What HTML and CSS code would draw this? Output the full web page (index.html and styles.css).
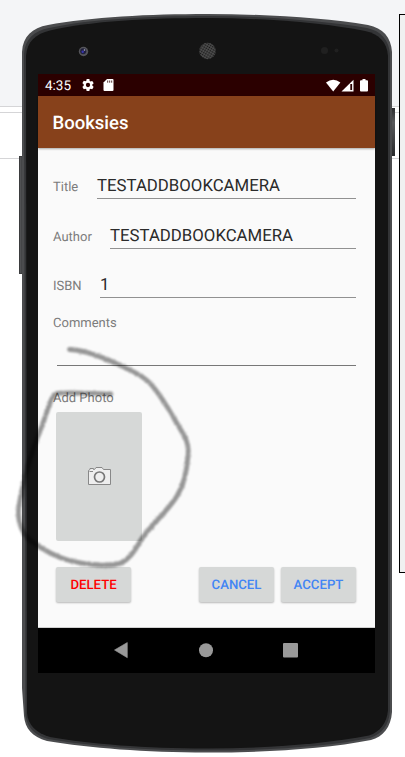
FILE: index.html
```html
<!DOCTYPE html>
<html lang="en">
<head>
<meta charset="utf-8">
<title>Booksies</title>
<link rel="stylesheet" href="styles.css">
</head>
<body>
<div class="scene">
  <svg class="device" width="405" height="757" viewBox="0 0 405 757" aria-hidden="true">
    <defs>
      <linearGradient id="key" x1="0" x2="0" y1="0" y2="1"><stop offset="0" stop-color="#2b2c2e"/><stop offset=".3" stop-color="#58595b"/><stop offset="1" stop-color="#28292b"/></linearGradient>
      <pattern id="mesh" width="2.400" height="2.400" patternUnits="userSpaceOnUse" patternTransform="rotate(30)"><rect width="2.400" height="2.400" fill="#505050"/><circle cx="1.200" cy="1.200" r=".85" fill="#171717"/></pattern>
    </defs>
    <rect width="405" height="757" fill="#fff"/>
    <rect width="405" height="106" fill="#f4f5f7"/>
    <path d="M0 106.5H405M0 112.5H405M0 158.5H405" stroke="#d5d5d7"/>
    <rect x="399.5" y="14.500" width="20" height="558" fill="#f0f0f0" stroke="#000"/>
    <rect x="19" y="156" width="5" height="118" fill="#3b3c3e"/>
    <rect x="20" y="157" width="1.500" height="116" fill="#505153"/>
    <rect x="391" y="108" width="4" height="48" fill="url(#key)"/>
    <path d="M22 52C23 36 32 28 48 25C90 17 150 14 207 14C265 14 325 18 368 25C383 28 391 37 392 52V712C391 727 383 737 371 740C325 749 265 752.500 207 752.500C145 752.500 90 748 47 741C32 737 25 728 24 716L22 688Z" fill="#4b4c4e"/>
    <path d="M24 54C25 39 34 31 49 28C90 19 150 16 207 16C265 16 325 21 367 28C381 31 389 40 390 54V711C389 725 382 734 370 738C325 747 265 750.500 207 750.500C145 750.500 90 746 48 739C34 735 27 727 25.500 715Z" fill="#333436"/>
    <path d="M26 56C27 41 36 34 50 30.500C90 21 150 18 207 18C265 18 325 23 365 31C379 34 387 42 388 56V710C387 723 380 732 369 735.500C325 744 265 748.500 207 748.500C145 748.500 90 744 50 737C36 733 28 725 27 713Z" fill="#141414"/>
    <circle cx="83.500" cy="51.500" r="4.700" fill="#55555a"/>
    <circle cx="83.200" cy="51.200" r="3" fill="#20203c"/>
    <circle cx="82.700" cy="51.800" r="1.200" fill="#3a36b0"/>
    <circle cx="84.500" cy="50" r=".8" fill="#b9b9cb"/>
    <circle cx="207.500" cy="51" r="8.300" fill="url(#mesh)"/>
    <circle cx="324.500" cy="50.500" r="3.500" fill="#202020"/>
    <circle cx="336.500" cy="50.500" r="2" fill="#202020"/>
  </svg>

  <main class="screen">
    <header class="status">
      <span class="clock">4:35</span>
      <svg class="gear" width="12" height="12" viewBox="2 2 20 20"><path fill="#fff" d="M19.140 12.940c.04-.3.06-.61.06-.94s-.02-.64-.07-.94l2.030-1.580a.49.49 0 0 0 .12-.61l-1.920-3.320a.49.49 0 0 0-.59-.22l-2.390.96a7 7 0 0 0-1.620-.94l-.36-2.540A.48.48 0 0 0 13.920 2h-3.840a.48.48 0 0 0-.48.41l-.36 2.540a7 7 0 0 0-1.620.94l-2.390-.96a.48.48 0 0 0-.59.22L2.720 8.470a.48.48 0 0 0 .12.610l2.030 1.580a7 7 0 0 0 0 2.680l-2.030 1.580a.49.49 0 0 0-.12.610l1.920 3.320c.12.220.37.290.59.220l2.390-.96c.5.380 1.030.7 1.620.94l.36 2.540c.05.240.24.410.48.410h3.840c.24 0 .44-.17.480-.41l.36-2.540a7 7 0 0 0 1.620-.94l2.390.96c.22.080.47 0 .59-.22l1.920-3.320a.48.48 0 0 0-.12-.61zM12 15.600a3.600 3.600 0 1 1 0-7.200 3.600 3.600 0 0 1 0 7.200z"/></svg>
      <svg class="card" width="11" height="12" viewBox="0 0 10 12"><path fill="#fff" d="M3.500 0H9a1 1 0 0 1 1 1v10a1 1 0 0 1-1 1H1a1 1 0 0 1-1-1V3.500z"/><path d="M4.200 1.500V3.700M6.200 1.500V3.700M8.200 1.500V3.700" stroke="#2b0000" stroke-width=".8"/></svg>
      <svg class="signals" width="42" height="13" viewBox="0 0 42 13"><path fill="#fff" d="M0 3.500Q7.200-2.200 14.400 3.500L7.200 12.500z"/><path fill="#fff" d="M15.500 12.500L27.500 .8V12.500z"/><path d="M25.200 5V11" stroke="#2b0000" stroke-width="1.800"/><path fill="#fff" d="M35 1.200h1.500V0h3v1.200H41q1 0 1 1V11.500q0 1-1 1h-6q-1 0-1-1V2.200q0-1 1-1z"/></svg>
    </header>
    <div class="appbar">Booksies</div>
    <div class="content">
      <div class="field"><span class="label">Title</span><span class="value title-value">TESTADDBOOKCAMERA</span></div>
      <div class="field"><span class="label">Author</span><span class="value author-value">TESTADDBOOKCAMERA</span></div>
      <div class="field isbn"><span class="label">ISBN</span><span class="value isbn-value">1</span></div>
      <div class="label comments">Comments</div>
      <div class="comment-input"></div>
      <div class="label photo-label">Add Photo</div>
      <div class="photo">
        <svg width="24" height="20" viewBox="0 0 24 20" fill="#eee" stroke="#888"><path d="M1.500 4.500L3 3.500V2.500H6.500V3.500H7.500L9 1.500H15L16.500 3.500H23.500V18.500H1.500z"/><circle cx="12.500" cy="11" r="5" stroke="#777" stroke-width="1.700"/><path d="M2.500 5.500H6" fill="none"/></svg>
      </div>
      <div class="actions">
        <span class="button delete">DELETE</span><span class="button">CANCEL</span><span class="button">ACCEPT</span>
      </div>
    </div>
    <nav class="nav">
      <svg width="337" height="45" viewBox="0 0 337 45" fill="#999"><path d="M76.500 22L89.300 14.500V29.700z" stroke="#999" stroke-width=".6" stroke-linejoin="round"/><circle cx="168" cy="22.300" r="7"/><rect x="245" y="15" width="15" height="14.500" rx="1"/></svg>
    </nav>
  </main>

  <svg class="scribble" width="405" height="757" viewBox="0 0 405 757" aria-hidden="true">
    <filter id="rough" x="-5%" y="-5%" width="110%" height="110%"><feTurbulence type="fractalNoise" baseFrequency=".9" numOctaves="1" seed="4" result="n"/><feDisplacementMap in="SourceGraphic" in2="n" scale="3" xChannelSelector="R" yChannelSelector="G"/><feGaussianBlur stdDeviation=".8"/></filter>
    <g fill="none" stroke="#000" stroke-linecap="round" stroke-linejoin="round" opacity=".4" filter="url(#rough)">
      <path stroke-width="4.800" d="M69.500 349.500C83 350 97 355 113 362C130 370 143 375 152 385.500C163 398 172 415 182 432C188 441 189 448 188 456C187 469 184 485 177 496C168 511 153 523 143 537C136 547 132 558 121 563C112 567 88 565 71 561C55 557 42 549 31 541C22 533 18.500 524 18.500 513C18.500 501 23 486 27 470C31 452 38 436 44 420C48 409 51 397 55 394C63 391 95 394 111 394"/>
    </g>
  </svg>
</div>
</body>
</html>
```

FILE: styles.css
```css
* { box-sizing: border-box; }
body { margin: 0; font-family: Roboto, "Liberation Sans", sans-serif; text-rendering: geometricPrecision; }
svg { display: block; flex: none; }
.scene { position: relative; width: 405px; height: 757px; overflow: hidden; padding: 74px 30px 0 38px; }
.device, .scribble { position: absolute; top: 0; left: 0; }
.scribble { pointer-events: none; }
.screen { position: relative; width: 337px; height: 599px; background: #fafafa; }
.status { height: 22px; background: #2b0000; color: #fff; display: flex; align-items: center; padding: 0 7px; }
.clock { width: 37px; padding-top: 1px; font-size: 13.500px; }
.card { margin-left: 9px; }
.signals { margin-left: auto; }
.appbar { height: 52px; padding-left: 14.500px; background: #87411b; color: #fff; font-size: 18.500px; font-weight: 500; line-height: 55px; box-shadow: 0 1px 2px #0005; }
.content { height: 480px; padding: 0 19px 0 15px; border-bottom: 1px solid #d0d0d0; }
.field { height: 50px; display: flex; align-items: flex-end; justify-content: space-between; }
.field.isbn { height: 49px; }
.field:first-child { height: 51px; }
.label { color: #7c7c7c; font-size: 13px; line-height: 16px; }
.field .label { margin-bottom: 3px; }
.value { border-bottom: 1px solid #919191; color: #2b2b2b; font-size: 16.800px; line-height: 24px; height: 25px; white-space: nowrap; font-weight: 400; }
.title-value { width: 259px; }
.author-value { width: 246px; }
.isbn-value { width: 256px; }
.comments { margin-top: 18px; }
.comment-input { height: 34px; margin-left: 4px; border-bottom: 1px solid #777; }
.photo-label { margin-top: 25px; }
.photo { width: 86px; height: 129px; margin: 5px 0 0 3.400px; background: #d6d8d7; border-radius: 2px; display: flex; align-items: center; justify-content: center; padding: 0 1px 2px 0; }
.actions { margin: 26px 0 0 3px; display: flex; gap: 7px; }
.button { width: 75px; height: 35px; border-radius: 2px; background: #d6d8d7; box-shadow: 0 1px 2px #0004; color: #4285f4; text-align: center; line-height: 37px; font-size: 13.200px; font-weight: 500; }
.delete { color: #ff0000; margin-right: auto; }
.nav { height: 45px; background: #000; }
```
